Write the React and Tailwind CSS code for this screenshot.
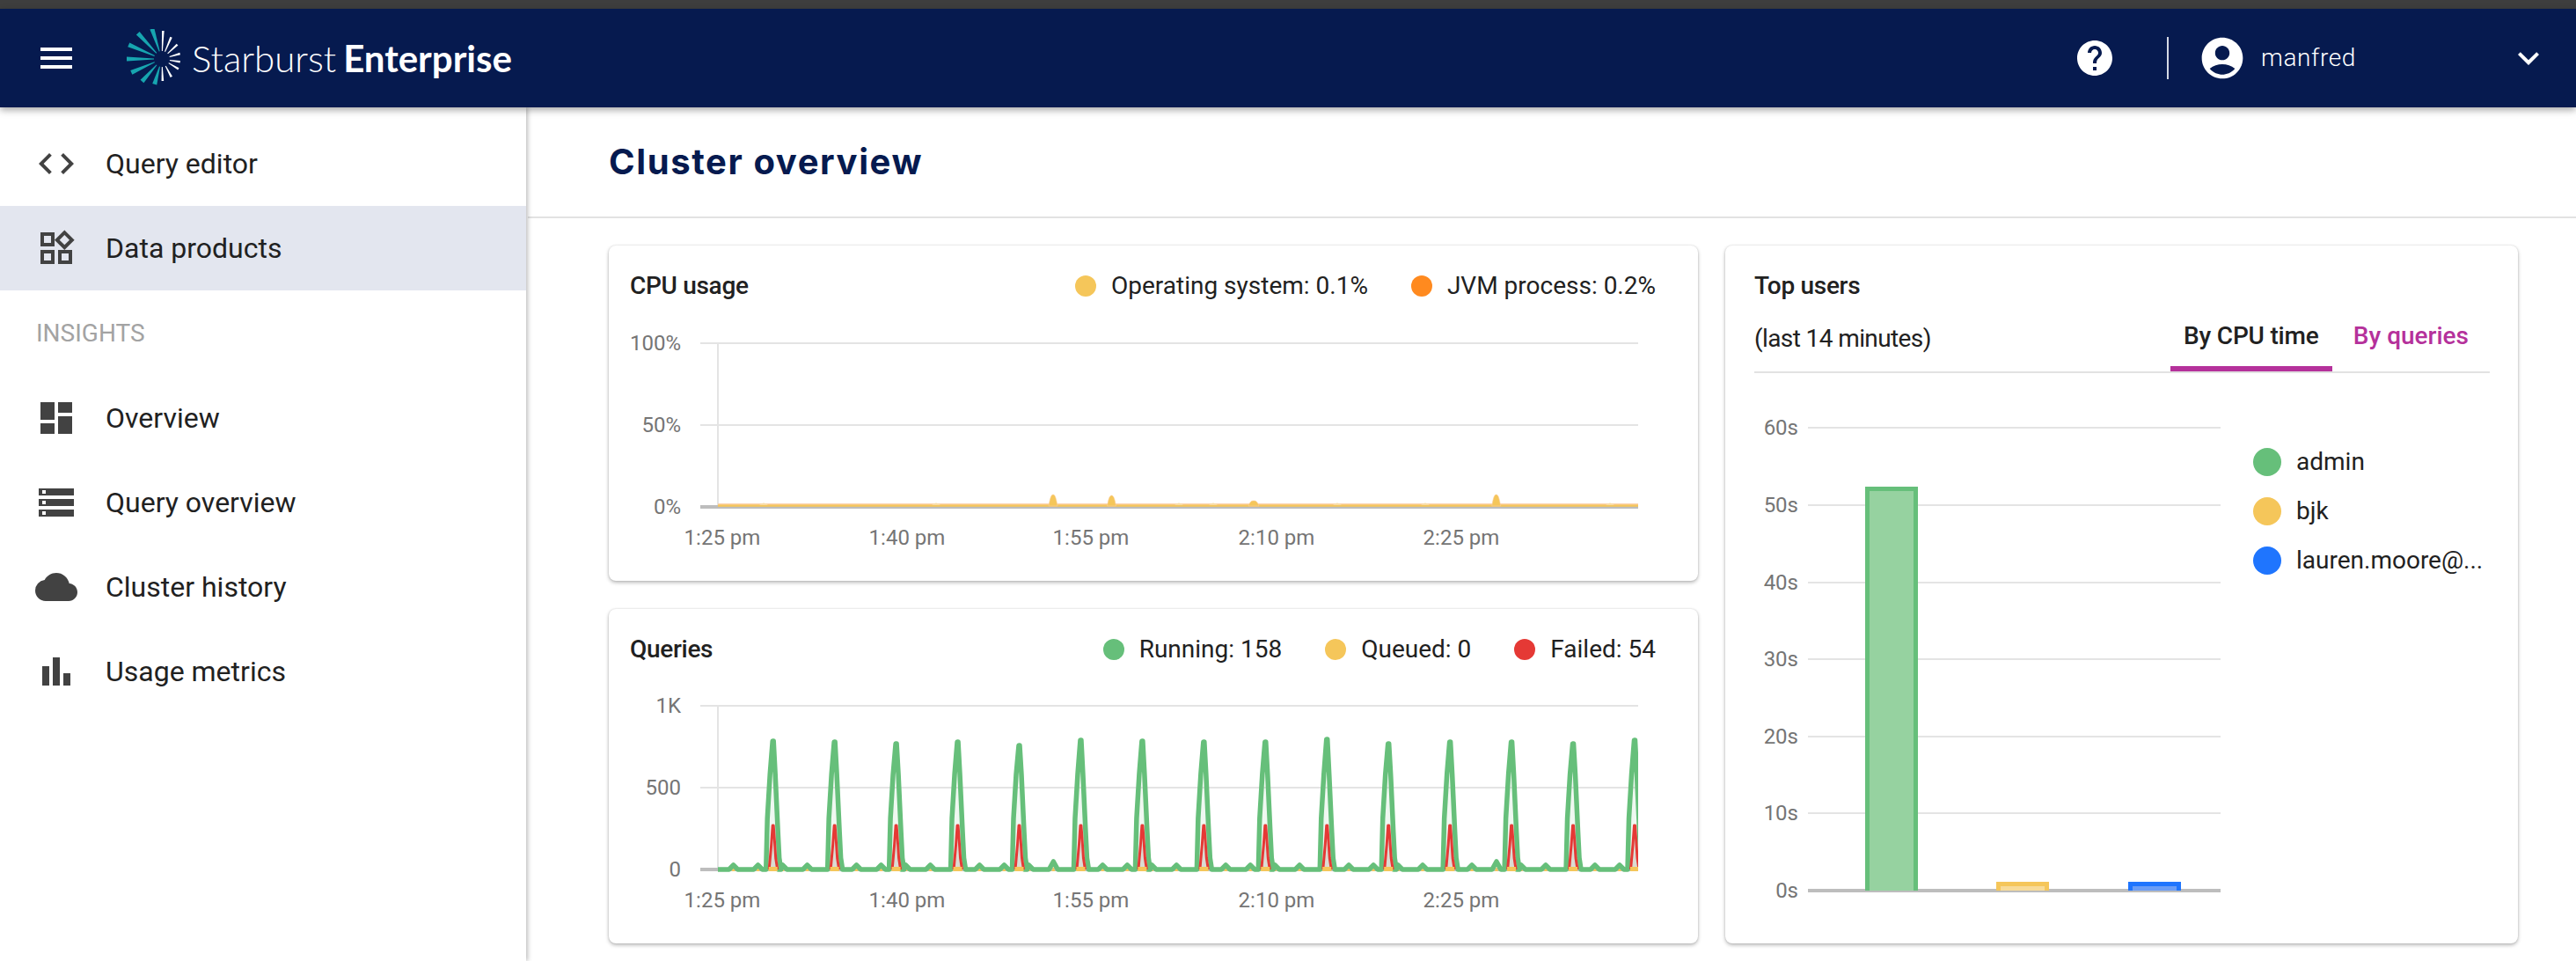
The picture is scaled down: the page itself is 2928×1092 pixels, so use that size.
import { MdMenu, MdCode, MdOutlineWidgets, MdDashboard, MdStorage, MdCloud, MdBarChart, MdHelp, MdAccountCircle, MdExpandMore } from 'react-icons/md';

const GREEN = '#66bf7a';
const YELLOW = '#f5c65a';
const ORANGE = '#ff8a1f';
const RED = '#e53935';
const BLUE = '#1f75fe';

const TICKS = [
  ['1:25 pm', 821],
  ['1:40 pm', 1031],
  ['1:55 pm', 1240],
  ['2:10 pm', 1451],
  ['2:25 pm', 1661],
];

// top of every tall spike in the queries chart
const PEAK_TOPS = [842, 843, 845, 843, 847, 841, 842, 843, 843, 840, 845, 843, 843, 845, 841];
const PEAKS = PEAK_TOPS.map((top, i) => ({ x: 878.7 + i * 69.95, top }));

// small bumps every 28px, every fifth slot is empty
const BUMPS = Array.from({ length: 37 }, (_, k) => k)
  .filter((k) => k % 5 !== 4)
  .map((k) => ({ x: 833.6 + k * 27.98, top: k === 13 || k === 31 ? 979 : 983 }));

function greenPoints() {
  const shapes = [
    ...PEAKS.map((p) => ({
      x: p.x,
      pts: [[-8, 988], [-6.5, 930], [-3.5, 880], [-0.5, p.top], [0.5, p.top], [2.5, 880], [5.5, 945], [7, 975], [9, 988]],
    })),
    ...BUMPS.map((b) => ({ x: b.x, pts: [[-5, 988], [0, b.top], [5, 988]] })),
  ].sort((a, b) => a.x - b.x);
  const out = [[816, 988]];
  shapes.forEach((s) => s.pts.forEach(([dx, y]) => out.push([s.x + dx, y])));
  return out.map((p) => p.join(',')).join(' ');
}

function redPoints(p) {
  return [[-4.5, 988], [-2, 960], [-0.5, 938], [0.5, 938], [1.5, 952], [3, 975], [5, 988]]
    .map(([dx, y]) => `${p.x + dx},${y}`)
    .join(' ');
}

const CPU_SPIKES = [
  [1197, 562, 5],
  [1263.5, 563, 5],
  [1425, 569, 6],
  [1700.7, 562, 5],
];
const CPU_NOISE = [868, 1064, 1340, 1379, 1520, 1620, 1830];

// burst rays: angle in degrees, outer radius, colour
const RAYS = [
  [-108, 36, 1], [-133, 40, 1], [-157, 41, 1], [180, 40, 1], [156, 38, 1], [131.5, 34, 1], [106, 30, 1],
  [-87.6, 32, 0], [-67, 27, 0], [-43, 24, 0], [-16, 21.5, 0], [9, 21, 0], [31, 22, 0], [62, 23, 0], [88, 25, 0],
];

function rayPoints(angle, r, teal) {
  const a = (angle * Math.PI) / 180;
  const inner = 9;
  const halfOut = teal ? 2.6 : 1.3;
  const ux = Math.cos(a);
  const uy = Math.sin(a);
  const pt = (d, s) => `${(d * ux - s * uy).toFixed(2)},${(d * uy + s * ux).toFixed(2)}`;
  return [pt(inner, -0.5), pt(r, -halfOut), pt(r, halfOut), pt(inner, 0.5)].join(' ');
}

function Burst() {
  return (
    <svg width="62" height="66" viewBox="-41 -34 62 66" className="shrink-0">
      {RAYS.map(([angle, r, teal]) => (
        <polygon key={angle} points={rayPoints(angle, r, teal)} fill={teal ? '#17a5b0' : '#ffffff'} />
      ))}
    </svg>
  );
}

function NavItem({ icon: Icon, label, active }) {
  return (
    <div className={`h-24 flex items-center gap-8 pl-10 text-[32px] text-[#212121] ${active ? 'bg-[#e3e6ef]' : ''}`}>
      <Icon className="w-12 h-12 text-[#424242] shrink-0" />
      <span>{label}</span>
    </div>
  );
}

function LegendItem({ color, children }) {
  return (
    <div className="flex items-center gap-[17px]">
      <span className="w-6 h-6 rounded-full" style={{ backgroundColor: color }} />
      <span>{children}</span>
    </div>
  );
}

function Axis({ rows, baseline }) {
  return (
    <>
      {rows.map(([label, y]) => (
        <g key={label}>
          <text x="774" y={y} textAnchor="end" dominantBaseline="central" fontSize="24" fill="#757575">
            {label}
          </text>
          {y !== baseline && <rect x="796" y={y - 1} width="1066" height="2" fill="#e4e4e4" />}
        </g>
      ))}
      <rect x="815" y={rows[0][1]} width="2" height={baseline - rows[0][1]} fill="#e4e4e4" />
      <rect x="796" y={baseline - 2} width="1066" height="4" fill="#bdbdbd" />
      {TICKS.map(([label, x]) => (
        <text key={label} x={x} y={baseline + 35} textAnchor="middle" dominantBaseline="central" fontSize="24" fill="#757575">
          {label}
        </text>
      ))}
    </>
  );
}

function CpuChart() {
  return (
    <svg width="1238" height="288" viewBox="692 371 1238 288" className="block">
      <Axis rows={[['100%', 390], ['50%', 483], ['0%', 576]]} baseline={576} />
      <rect x="816" y="572" width="1046" height="2" fill="#fbd3ae" />
      <rect x="816" y="573.4" width="1046" height="2.4" fill={YELLOW} />
      {CPU_NOISE.map((x) => (
        <path key={x} d={`M${x - 5} 574 Q${x} 569 ${x + 5} 574 Z`} fill="#f9dca6" />
      ))}
      {CPU_SPIKES.map(([x, top, w]) => (
        <path key={x} d={`M${x - w} 575 C${x - 4} 570 ${x - 3} ${top} ${x} ${top} C${x + 3} ${top} ${x + 4} 570 ${x + w} 575 Z`} fill={YELLOW} stroke="#fbcf9c" strokeWidth="0.6" />
      ))}
    </svg>
  );
}

function QueriesChart() {
  const green = greenPoints();
  return (
    <svg width="1238" height="288" viewBox="692 784 1238 288" className="block">
      <defs>
        <clipPath id="plot">
          <rect x="816" y="790" width="1046" height="210" />
        </clipPath>
      </defs>
      <Axis rows={[['1K', 802], ['500', 895], ['0', 988]]} baseline={988} />
      <g clipPath="url(#plot)">
        <polygon points={`${green} 1862,988`} fill={GREEN} fillOpacity="0.1" />
        {PEAKS.map((p) => (
          <g key={p.x}>
            <polygon points={redPoints(p)} fill="#8a6f60" fillOpacity="0.2" />
            <rect x={p.x - 5} y="985" width="10" height="5" fill={YELLOW} />
          </g>
        ))}
        {BUMPS.map((b) => (
          <polygon key={b.x} points={`${b.x - 2},990 ${b.x},985 ${b.x + 2},990`} fill={YELLOW} />
        ))}
        <polyline points={green} fill="none" stroke={GREEN} strokeWidth="5.5" strokeLinejoin="round" />
        {PEAKS.map((p) => (
          <polyline key={p.x} points={redPoints(p)} fill="none" stroke={RED} strokeWidth="3" strokeLinejoin="round" />
        ))}
        {PEAKS.map((p) => (
          <rect key={p.x} x={p.x - 5} y="985" width="10" height="5" fill={YELLOW} />
        ))}
      </g>
    </svg>
  );
}

function BarsChart() {
  const rows = [['60s', 486], ['50s', 574], ['40s', 662], ['30s', 749], ['20s', 837], ['10s', 924], ['0s', 1012]];
  const bars = [
    [2120, 553, GREEN, '#99d3a2'],
    [2269, 1002, YELLOW, '#f8dc9c'],
    [2419, 1002, BLUE, '#6f9ff5'],
  ];
  return (
    <svg width="540" height="640" viewBox="1994 424 540 640" className="block shrink-0">
      {rows.map(([label, y]) => (
        <g key={label}>
          <text x="2044" y={y} textAnchor="end" dominantBaseline="central" fontSize="24" fill="#757575">
            {label}
          </text>
          {label !== '0s' && <rect x="2055" y={y - 1} width="469" height="2" fill="#e4e4e4" />}
        </g>
      ))}
      <rect x="2055" y="1010" width="469" height="4" fill="#bdbdbd" />
      {bars.map(([x, top, stroke, fill]) => (
        <g key={x}>
          <rect x={x} y={top} width="60" height={1012 - top} fill={stroke} />
          <rect x={x + 5} y={top + 5} width="50" height={1012 - top - 5} fill={fill} fillOpacity="0.95" />
        </g>
      ))}
    </svg>
  );
}

export default function App() {
  return (
    <div className="w-[2928px] h-[1092px] overflow-hidden bg-white flex flex-col font-['Roboto',sans-serif] text-[#212121]">
      <div className="h-[10px] bg-[#3e3e3e] shrink-0" />

      {/* Top bar */}
      <header className="h-[112px] shrink-0 bg-[#061a4f] text-white flex items-center relative z-10 shadow-[0_3px_8px_rgba(0,0,0,0.35)]">
        <MdMenu className="w-12 h-12 ml-10 shrink-0" />
        <div className="flex items-center ml-[55px]">
          <Burst />
          <span className="ml-[13px] font-['Lato',sans-serif] font-light text-[42px] leading-none">Starburst</span>
          <span className="ml-[8px] font-['Lato',sans-serif] font-bold text-[42px] leading-none">Enterprise</span>
        </div>
        <div className="ml-auto flex items-center">
          <MdHelp className="w-12 h-12" />
          <div className="w-[2px] h-12 bg-[#d5d9e4] ml-[58px]" />
          <MdAccountCircle className="w-14 h-14 ml-[33px]" />
          <span className="ml-[16px] text-[28px] font-light tracking-[0.6px] w-[280px]">manfred</span>
          <MdExpandMore className="w-12 h-12 mr-[30px]" />
        </div>
      </header>

      <div className="flex-1 flex min-h-0">
        {/* Sidebar */}
        <aside className="w-[598px] shrink-0 pt-4 bg-white shadow-[2px_0_5px_rgba(0,0,0,0.25)] relative">
          <NavItem icon={MdCode} label="Query editor" />
          <NavItem icon={MdOutlineWidgets} label="Data products" active />
          <div className="h-[97px] flex items-center pl-[41px] text-[28px] text-[#a3a3a3]">INSIGHTS</div>
          <NavItem icon={MdDashboard} label="Overview" />
          <NavItem icon={MdStorage} label="Query overview" />
          <NavItem icon={MdCloud} label="Cluster history" />
          <NavItem icon={MdBarChart} label="Usage metrics" />
        </aside>

        <main className="flex-1 min-w-0">
          <div className="h-[126px] border-b-2 border-[#e2e2e2] ml-[2px] pl-[92px] flex items-center">
            <h1 className="font-['Inter',sans-serif] font-bold text-[40px] tracking-[1.6px] text-[#061a4f]">Cluster overview</h1>
          </div>

          <div className="flex gap-[31px] pl-[94px] pt-[31px]">
            <div className="w-[1238px] flex flex-col gap-8">
              {/* CPU usage */}
              <section className="h-[381px] bg-white rounded-lg shadow-[0_2px_4px_rgba(0,0,0,0.28),0_0_2px_rgba(0,0,0,0.15)] overflow-hidden">
                <div className="h-[92px] flex items-center justify-between pl-6 pr-12 text-[28px]">
                  <h2 className="font-medium tracking-[-0.3px]">CPU usage</h2>
                  <div className="flex items-center gap-[49px]">
                    <LegendItem color={YELLOW}>Operating system: 0.1%</LegendItem>
                    <LegendItem color={ORANGE}>JVM process: 0.2%</LegendItem>
                  </div>
                </div>
                <CpuChart />
              </section>

              {/* Queries */}
              <section className="h-[380px] bg-white rounded-lg shadow-[0_2px_4px_rgba(0,0,0,0.28),0_0_2px_rgba(0,0,0,0.15)] overflow-hidden">
                <div className="h-[92px] flex items-center justify-between pl-6 pr-12 text-[28px]">
                  <h2 className="font-medium tracking-[-0.3px]">Queries</h2>
                  <div className="flex items-center gap-[49px]">
                    <LegendItem color={GREEN}>Running: 158</LegendItem>
                    <LegendItem color={YELLOW}>Queued: 0</LegendItem>
                    <LegendItem color={RED}>Failed: 54</LegendItem>
                  </div>
                </div>
                <QueriesChart />
              </section>
            </div>

            {/* Top users */}
            <section className="w-[901px] h-[793px] bg-white rounded-lg shadow-[0_2px_4px_rgba(0,0,0,0.28),0_0_2px_rgba(0,0,0,0.15)] overflow-hidden pt-6 pl-[33px] pr-[32px] text-[28px]">
              <h2 className="h-11 flex items-center font-medium tracking-[-0.3px]">Top users</h2>
              <div className="h-[77px] flex justify-between border-b-2 border-[#e2e2e2]">
                <span className="flex items-center tracking-[-0.6px]">(last 14 minutes)</span>
                <div className="flex">
                  <div className="w-[184px] flex items-center justify-center font-medium tracking-[-0.2px] border-b-[6px] border-[#b5319b]">By CPU time</div>
                  <div className="px-6 flex items-center font-medium text-[#b5319b] border-b-[6px] border-transparent">By queries</div>
                </div>
              </div>
              <div className="flex">
                <BarsChart />
                <div className="ml-[27px] mt-[73px]">
                  {[['admin', GREEN], ['bjk', YELLOW], ['lauren.moore@...', BLUE]].map(([name, color]) => (
                    <div key={name} className="h-14 flex items-center gap-[17px] whitespace-nowrap">
                      <span className="w-8 h-8 rounded-full shrink-0" style={{ backgroundColor: color }} />
                      <span>{name}</span>
                    </div>
                  ))}
                </div>
              </div>
            </section>
          </div>
        </main>
      </div>
    </div>
  );
}
